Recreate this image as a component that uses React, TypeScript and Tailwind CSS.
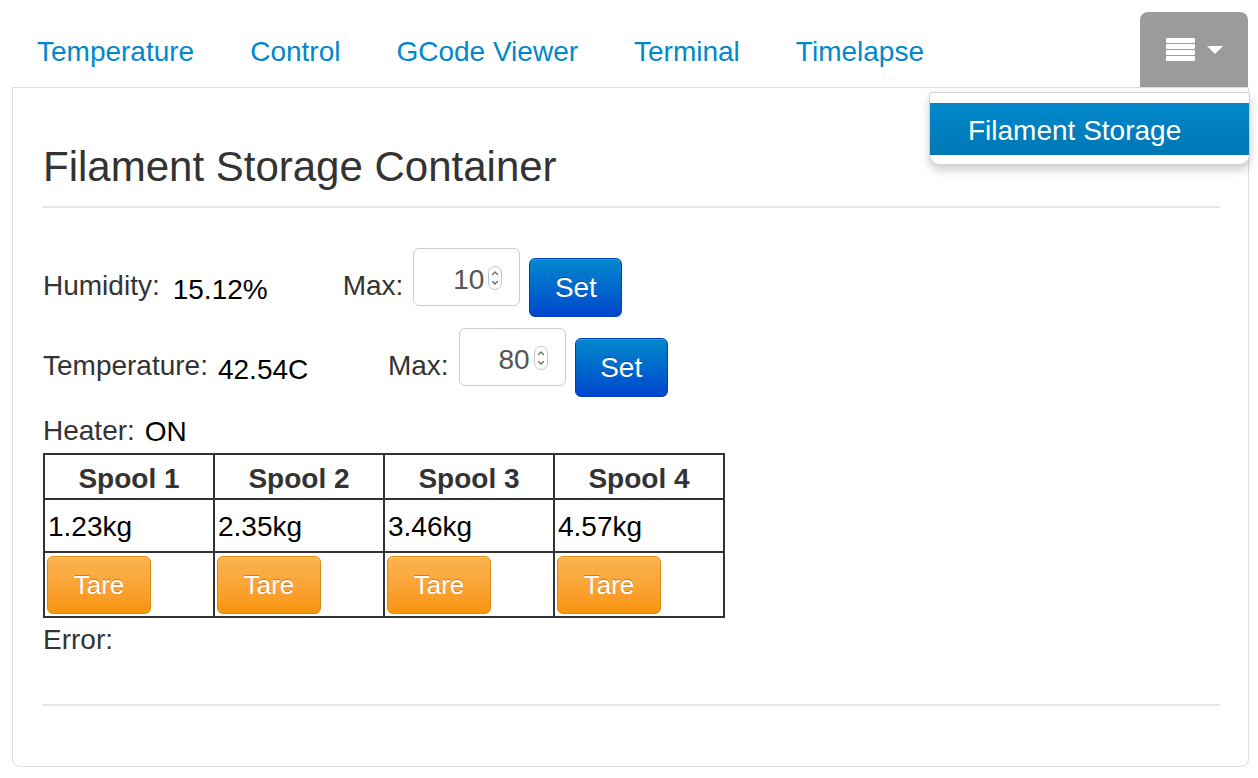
import { useState } from 'react';

const tabs = ['Temperature', 'Control', 'GCode Viewer', 'Terminal', 'Timelapse'];

const spools = [
    { name: 'Spool 1', weight: '1.23kg' },
    { name: 'Spool 2', weight: '2.35kg' },
    { name: 'Spool 3', weight: '3.46kg' },
    { name: 'Spool 4', weight: '4.57kg' },
];

function ReorderIcon() {
    return <svg width="29" height="23" viewBox="0 0 29 23" fill="#fff">
        <rect x="0" y="0" width="29" height="5" rx="1" />
        <rect x="0" y="6" width="29" height="5" rx="1" />
        <rect x="0" y="12" width="29" height="5" rx="1" />
        <rect x="0" y="18" width="29" height="5" rx="1" />
    </svg>;
}

function Caret() {
    return <svg width="16" height="8" viewBox="0 0 16 8" fill="#fff">
        <polygon points="0,0 16,0 8,8" />
    </svg>;
}

function Spinner() {
    return <svg width="14" height="24" viewBox="0 0 14 24" fill="none">
        <rect x="0.5" y="0.5" width="13" height="23" rx="6.5" fill="#fff" stroke="#c4c4c4" />
        <path d="M4.5 8.5 L7 6 L9.5 8.5" stroke="#666" strokeWidth="1.2" strokeLinecap="round" strokeLinejoin="round" />
        <path d="M4.5 15.5 L7 18 L9.5 15.5" stroke="#666" strokeWidth="1.2" strokeLinecap="round" strokeLinejoin="round" />
    </svg>;
}

function NumberBox({ value }: { value: string }) {
    return <div className="relative ml-[10px]">
        <input
            type="text"
            readOnly
            value={value}
            className="block w-[107px] h-[58px] border border-[#ccc] rounded-[6px] bg-white text-right pr-[35px] pt-[6px] text-[28px] text-[#555] outline-none"
        />
        <div className="absolute left-[75px] top-[18px]">
            <Spinner />
        </div>
    </div>;
}

function SetButton() {
    return <button className="ml-[9px] mt-[10px] w-[93px] h-[59px] pt-[13px] flex justify-center items-start rounded-[6px] border border-[#0040b8] bg-linear-to-b from-[#0088cc] to-[#0044cc] text-white text-[28px] leading-[32px] [text-shadow:0_-1px_0_rgba(0,0,0,0.25)] shadow-[inset_0_1px_0_rgba(255,255,255,0.2)]">
        Set
    </button>;
}

function ReadingRow({ label, value, gap, valueWidth, max }: { label: string; value: string; gap: string; valueWidth: string; max: string }) {
    return <div className="flex items-start">
        <span className="mt-[22px] leading-[32px]">{label}</span>
        <span className={`mt-[26px] leading-[32px] text-black ${gap} ${valueWidth}`}>{value}</span>
        <span className="mt-[22px] leading-[32px]">Max:</span>
        <NumberBox value={max} />
        <SetButton />
    </div>;
}

export default function App() {
    const [active] = useState('Filament Storage');

    return <div className="min-h-screen bg-white font-['Liberation_Sans',Arial,Helvetica,sans-serif] text-[28px] text-[#333]">
        <div className="relative pl-[12px] pr-[9px] pt-[12px]">
            <div className="flex h-[75px]">
                <nav className="flex gap-[56px] pl-[25px] pt-[24px]">
                    {tabs.map((t) => <a key={t} href="#" className="leading-[32px] text-[#0088cc]">{t}</a>)}
                </nav>
                <button className="ml-auto mr-[1px] w-[108px] h-[75px] rounded-t-[8px] bg-[#9b9b9b] flex items-center justify-center gap-[12px]">
                    <ReorderIcon />
                    <Caret />
                </button>
            </div>

            <div className="h-[680px] border border-[#ddd] rounded-b-[8px] pl-[30px] pr-[28px] pt-[55px]">
                <h1 className="text-[42px] leading-[47px] font-normal">Filament Storage Container</h1>
                <div className="mt-[16px] border-t-2 border-[#e5e5e5]" />

                <div className="mt-[40px]">
                    <ReadingRow label="Humidity:" value="15.12%" gap="ml-[13px]" valueWidth="w-[170px]" max="10" />
                </div>
                <div className="mt-[11px]">
                    <ReadingRow label="Temperature:" value="42.54C" gap="ml-[10px]" valueWidth="w-[170px]" max="80" />
                </div>

                <div className="mt-[17px] flex items-start leading-[32px]">
                    <span className="mt-[1px]">Heater:</span>
                    <span className="ml-[10px] mt-[2px] text-black">ON</span>
                </div>

                <div className="mt-[5px] w-[682px] grid grid-cols-[repeat(4,170px)] border-l-2 border-t-2 border-[#333]">
                    {spools.map((s) => <div key={s.name} className="h-[45px] pt-[8px] border-r-2 border-b-2 border-[#333] text-center font-bold leading-[32px]">{s.name}</div>)}
                    {spools.map((s) => <div key={s.weight} className="h-[53px] pt-[11px] pl-[3px] border-r-2 border-b-2 border-[#333] text-black leading-[32px]">{s.weight}</div>)}
                    {spools.map((s) => <div key={s.name + '-tare'} className="h-[65px] pt-[3px] pl-[2px] border-r-2 border-b-2 border-[#333]">
                        <button className="w-[104px] h-[58px] pt-[13px] flex justify-center items-start rounded-[6px] border border-[#e08a10] bg-linear-to-b from-[#fbb450] to-[#f89406] text-white text-[26px] leading-[30px] [text-shadow:0_-1px_0_rgba(0,0,0,0.25)] shadow-[inset_0_1px_0_rgba(255,255,255,0.2)]">
                            Tare
                        </button>
                    </div>)}
                </div>

                <div className="mt-[6px] leading-[32px]">Error:</div>
                <div className="mt-[48px] border-t-2 border-[#e5e5e5]" />
            </div>

            <div className="absolute left-[929px] top-[92px] w-[321px] pt-[10px] pb-[9px] bg-white border border-[rgba(0,0,0,0.18)] rounded-b-[10px] rounded-t-[4px] shadow-[0_5px_10px_rgba(0,0,0,0.2)]">
                <a href="#" className="block h-[52px] pl-[38px] pt-[12px] leading-[32px] text-white bg-linear-to-b from-[#0088cc] to-[#0077b3]">{active}</a>
            </div>
        </div>
    </div>;
}
